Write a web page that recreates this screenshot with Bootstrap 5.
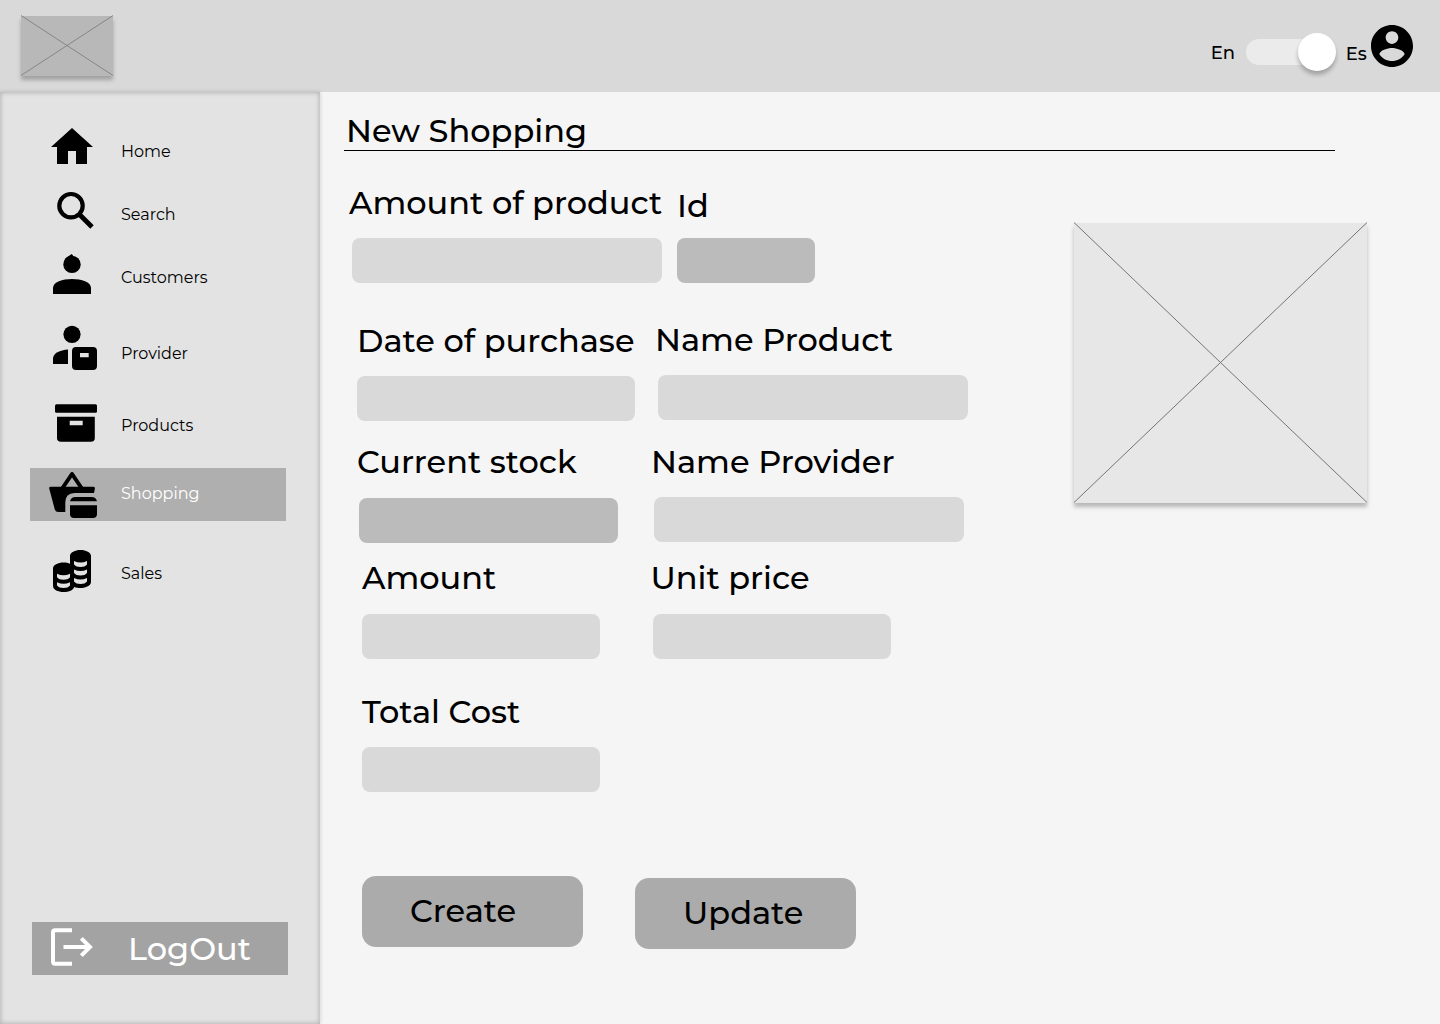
<!DOCTYPE html>
<html lang="en">
<head>
<meta charset="utf-8">
<meta name="viewport" content="width=device-width, initial-scale=1">
<title>New Shopping</title>
<link rel="stylesheet" href="https://cdn.jsdelivr.net/npm/bootstrap@5.3.0/dist/css/bootstrap.min.css">
<style>
  body { font-family: Montserrat, Inter, "Open Sans", sans-serif; background: #f5f5f5; color: #000; font-weight: 500; }
  .topbar { height: 92px; background: #d9d9d9; padding: 16px 27px 0 21px; }
  .thumb { background: #b8b8b8; width: 92px; height: 60px; box-shadow: 0 4px 4px rgba(0,0,0,.25); }
  .thumb svg, .photo svg { display: block; width: 100%; height: 100%; overflow: visible; }
  .lang { font-size: 18px; line-height: 22px; white-space: nowrap; }
  .lang-en { margin: 26px 0 0 auto; width: 35px; }
  .lang-es { margin: 27px 0 0 10px; width: 21.3px; }
  .switch { width: 90px; height: 38px; margin-top: 16.5px; }
  .switch-track { width: 75px; height: 26px; border-radius: 13px; background: #ebebeb; }
  .switch-knob { width: 38px; height: 38px; margin-left: -23px; border-radius: 50%; background: #fff; box-shadow: 0 4px 4px rgba(0,0,0,.25); }
  .avatar { width: 42px; height: 42px; margin: 9px 0 0 4px; flex: none; }

  .shell { height: 932px; }
  .side { width: 320px; flex: none; background: #e3e3e3; padding: 34px 0 49px 30px;
          box-shadow: inset 0 0 4px 1px rgba(0,0,0,.2), 0 0 4px rgba(0,0,0,.17); position: relative; }
  .side-item { width: 256px; height: 53px; padding-left: 15px; font-size: 16px; font-weight: 400; color: #000; }
  .side-item svg { width: 60px; height: 53px; overflow: visible; flex: none; }
  .side-item span { margin-left: 16px; padding-bottom: 1px; line-height: 20px; }
  .side-item.active { background: #afafaf; color: #fff; }
  .gap-a { margin-top: 10px; } .gap-b { margin-top: 23px; } .gap-c { margin-top: 19px; }
  .gap-d { margin-top: 15px; } .gap-e { margin-top: 27px; }
  .logout { width: 256px; height: 53px; margin-left: 2px; background: #a3a3a3; color: #fff; border: 0; padding: 0 0 0 13px; }
  .logout svg { width: 60px; height: 53px; overflow: visible; flex: none; }
  .logout span { font-size: 32px; line-height: 39px; margin-left: 23px; font-weight: 500; }

  .page-title { font-size: 32px; line-height: 39px; font-weight: 500; margin: 19px 0 0 24px; padding-left: 2px; width: 991px; height: 40px; border-bottom: 1px solid #000; }
  .entry label { display: block; font-size: 32px; line-height: 39px; white-space: nowrap; }
  .entry input { display: block; height: 45px; border: 0; border-radius: 8px; background: #d9d9d9; padding: 0 12px; width: 100%; }
  .entry input[readonly] { background: #bbb; }
  .line-1 { height: 137px; margin-top: 32px; } .line-2 { height: 122px; } .line-3 { height: 116px; }
  .line-4 { height: 134px; } .line-5 { height: 184px; }
  .e-amtprod { margin-left: 32px; width: 310px; }
  .e-amtprod label { margin: 0 0 16px -3px; }
  .e-id { margin-left: 15px; width: 138px; padding-top: 3px; }
  .e-id label { margin-bottom: 13px; }
  .e-date { margin-left: 37px; width: 278px; padding-top: 1px; }
  .e-date label { margin-bottom: 16px; }
  .e-nprod { margin-left: 23px; width: 310px; }
  .e-nprod label { margin: 0 0 16px -3px; }
  .e-stock { margin-left: 39px; width: 259px; }
  .e-stock label { margin: 0 0 17px -2px; }
  .e-nprov { margin-left: 36px; width: 310px; }
  .e-nprov label { margin: 0 0 16px -3px; }
  .e-amount { margin-left: 42px; width: 238px; }
  .e-amount label { margin-bottom: 17px; }
  .e-unit { margin-left: 53px; width: 238px; }
  .e-unit label { margin: 0 0 17px -2.5px; }
  .e-total { margin-left: 42px; width: 238px; }
  .e-total label { margin: 0 0 16px 0; }
  .act { width: 221px; height: 71px; border: 0; border-radius: 14px; background: #ababab; color: #000; font-size: 32px; line-height: 39px; font-weight: 500; text-align: left; padding: 0 0 2px 48px; }
  .act:hover { background: #9c9c9c; color: #000; }
  .act-create { margin-left: 42px; }
  .act-update { margin: 2px 0 0 52px; }
  .form-col { width: 754px; flex: none; }
  .photo { width: 293px; height: 280px; margin-top: 72px; background: #e7e7e7; box-shadow: 0 4px 4px rgba(0,0,0,.25); }
</style>
</head>
<body>
<header class="topbar d-flex align-items-start">
  <div class="thumb"><svg viewBox="0 0 92 60" fill="none" stroke="#868686" stroke-width="1"><path d="M0 -.5 92 59.5M0 59.5 92 -.5"/></svg></div>
  <span class="lang lang-en">En</span>
  <div class="switch d-flex align-items-center" role="switch" aria-checked="true"><div class="switch-track"></div><div class="switch-knob"></div></div>
  <span class="lang lang-es">Es</span>
  <svg class="avatar" viewBox="2 2 20 20"><path d="M12 2C6.48 2 2 6.48 2 12s4.48 10 10 10 10-4.48 10-10S17.52 2 12 2zm0 3c1.66 0 3 1.34 3 3s-1.34 3-3 3-3-1.34-3-3 1.34-3 3-3zm0 14.2c-2.5 0-4.71-1.28-6-3.22.03-1.99 4-3.08 6-3.08 1.99 0 5.97 1.09 6 3.08-1.29 1.94-3.5 3.22-6 3.22z"/></svg>
</header>

<div class="shell d-flex">
  <nav class="side d-flex flex-column">
    <a class="side-item d-flex align-items-center text-decoration-none" href="#">
      <svg viewBox="45 126 60 53"><path d="M72 128 93 147H87V164H76V151H68V164H57V147H51Z"/></svg><span>Home</span></a>
    <a class="side-item gap-a d-flex align-items-center text-decoration-none" href="#">
      <svg viewBox="45 189 60 53" fill="none" stroke="#000"><circle cx="71" cy="205.7" r="11.7" stroke-width="4.2"/><path d="M79 214 92 227" stroke-width="4.8"/></svg><span>Search</span></a>
    <a class="side-item gap-a d-flex align-items-center text-decoration-none" href="#">
      <svg viewBox="45 252 60 53"><circle cx="72" cy="264.400" r="8.700"/><path d="M64.500 260.500C66 256.500 69.500 256 71.700 254 73 255 73.200 256.200 73.800 257.200L72 262Z"/><path d="M53 294V288C53 282 62.500 279 72 279S91 282 91 288V294Z"/></svg><span>Customers</span></a>
    <a class="side-item gap-b d-flex align-items-center text-decoration-none" href="#">
      <svg viewBox="45 328 60 53"><circle cx="72" cy="334.3" r="8.6"/><path d="M53 364V358.500C53 353.500 60 350 68 349.500V364Z"/><path fill-rule="evenodd" d="M76 347H93Q97 347 97 351V366Q97 370 93 370H76Q72 370 72 366V351Q72 347 76 347ZM80 353V357.300H88.700V353Z"/></svg><span>Provider</span></a>
    <a class="side-item gap-c d-flex align-items-center text-decoration-none" href="#">
      <svg viewBox="45 400 60 53"><rect x="55" y="404.200" width="42" height="8.600" rx="1.500"/><path fill-rule="evenodd" d="M57 416.700H94.800V438Q94.800 441.800 91 441.800H61Q57 441.800 57 438ZM69.700 420.800V425.300H82.700V420.800Z"/></svg><span>Products</span></a>
    <a class="side-item active gap-d d-flex align-items-center text-decoration-none" href="#">
      <svg viewBox="45 468 60 53"><path d="M62.500 488 72 474 81.500 488" fill="none" stroke="#000" stroke-width="4" stroke-linejoin="round"/><path d="M50.500 486.800H93.500Q95 486.800 94.900 488.500L94 492.900H74.500Q65.300 493.500 65.300 502V512H58.500Q55.500 512 54.800 509.500L49.200 488.500Q49 486.800 50.500 486.800Z"/><path d="M70 501.300Q71 497 75.500 497H91.500Q96 497 97 501.300ZM70 505.300H97V514Q97 518 93 518H74Q70 518 70 514Z"/></svg><span>Shopping</span></a>
    <a class="side-item gap-e d-flex align-items-center text-decoration-none" href="#">
      <svg viewBox="45 548 60 53"><path d="M53 568.500C53 565 58 562.500 63.500 562.500 66 562.500 68.300 563 70 563.800V556C70 552.500 75 550 80.500 550S91 552.500 91 556V582C91 585.500 86 588 80.500 588 78.200 588 76 587.600 74.200 586.900 73.500 590 69 592 63.500 592 58 592 53 589.800 53 586Z"/><g fill="#e3e3e3"><path d="M74 561Q80.500 564 87 561V564.500Q85 567 80.500 567T74 564.500Z"/><path d="M74 569.500Q80.500 572.500 87 569.500V573Q85 575.500 80.500 575.500T74 573Z"/><path d="M74 578Q80.500 581 87 578V581.500Q85 584 80.500 584T74 581.500Z"/><path d="M57 573.800Q63.500 576.800 70 573.800V577.300Q68 579.800 63.500 579.800T57 577.300Z"/><path d="M57 582.300Q63.500 585.300 70 582.300V585.500Q68 588 63.500 588T57 585.500Z"/></g></svg><span>Sales</span></a>
    <button class="logout mt-auto d-flex align-items-center" type="button">
      <svg viewBox="45 922 60 53" fill="none" stroke="#fff" stroke-width="4"><path d="M72 930.200H55.200Q53 930.200 53 932.400V961.600Q53 963.800 55.200 963.800H72M63.500 947H89M81.300 938.300 90 947 81.300 955.700"/></svg><span>LogOut</span></button>
  </nav>

  <main class="flex-grow-1">
    <h1 class="page-title">New Shopping</h1>
    <div class="d-flex align-items-start">
      <form class="form-col">
        <div class="line-1 d-flex align-items-start">
          <div class="entry e-amtprod"><label for="f1">Amount of product</label><input id="f1" type="text"></div>
          <div class="entry e-id"><label for="f2">Id</label><input id="f2" type="text" readonly></div>
        </div>
        <div class="line-2 d-flex align-items-start">
          <div class="entry e-date"><label for="f3">Date of purchase</label><input id="f3" type="text"></div>
          <div class="entry e-nprod"><label for="f4">Name Product</label><input id="f4" type="text"></div>
        </div>
        <div class="line-3 d-flex align-items-start">
          <div class="entry e-stock"><label for="f5">Current stock</label><input id="f5" type="text" readonly></div>
          <div class="entry e-nprov"><label for="f6">Name Provider</label><input id="f6" type="text"></div>
        </div>
        <div class="line-4 d-flex align-items-start">
          <div class="entry e-amount"><label for="f7">Amount</label><input id="f7" type="text"></div>
          <div class="entry e-unit"><label for="f8">Unit price</label><input id="f8" type="text"></div>
        </div>
        <div class="line-5 d-flex align-items-start">
          <div class="entry e-total"><label for="f9">Total Cost</label><input id="f9" type="text"></div>
        </div>
        <div class="d-flex align-items-start">
          <button class="btn act act-create" type="button">Create</button>
          <button class="btn act act-update" type="button">Update</button>
        </div>
      </form>
      <div class="photo"><svg viewBox="0 0 293 280" fill="none" stroke="#757575" stroke-width="1"><path d="M0 -.5 293 279.500M0 279.500 293 -.5"/></svg></div>
    </div>
  </main>
</div>
<script src="https://cdn.jsdelivr.net/npm/bootstrap@5.3.0/dist/js/bootstrap.bundle.min.js"></script>
</body>
</html>
